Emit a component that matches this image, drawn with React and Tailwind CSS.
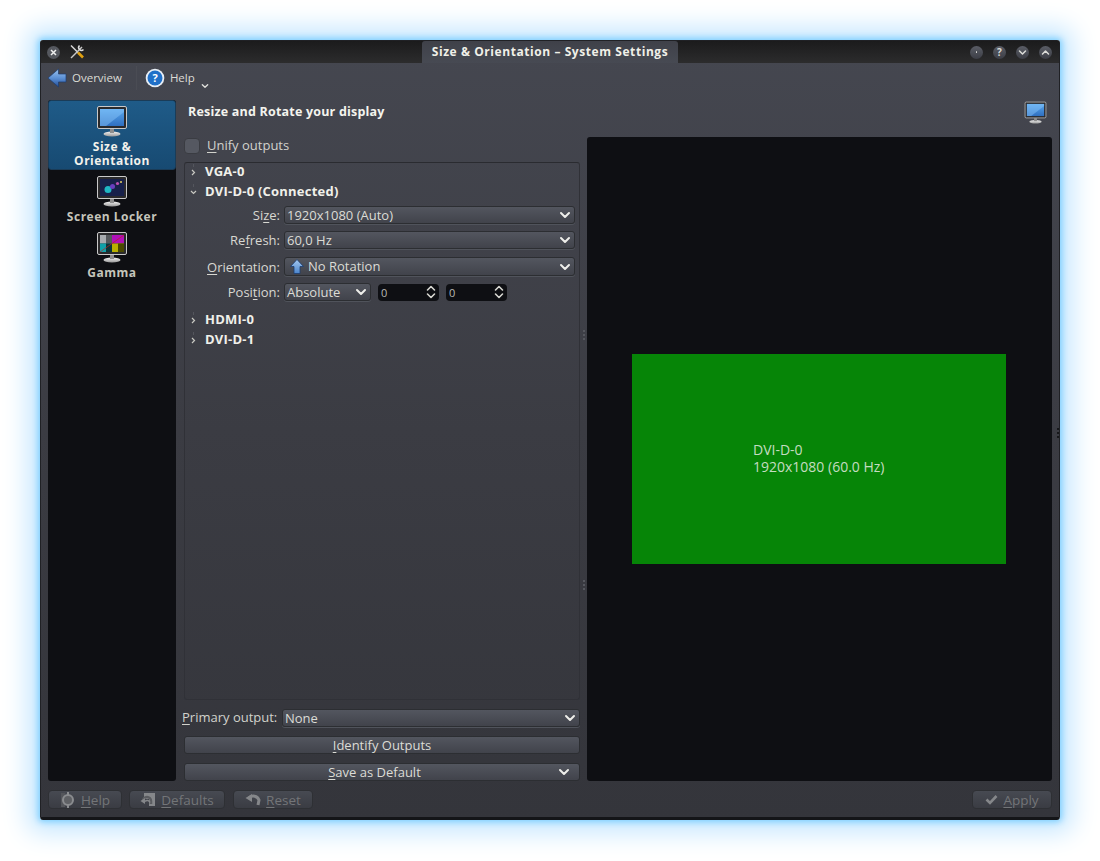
import React from "react";

const FONT = { fontFamily: '"Open Sans", "Noto Sans", sans-serif' };

function Chevron({ className = "", size = 12 }) {
  return (
    <svg width={size} height={size} viewBox="0 0 12 12" className={`shrink-0 ${className}`} fill="none">
      <path d="M2 4l4 4 4-4" stroke="currentColor" strokeWidth="2" strokeLinecap="round" strokeLinejoin="round" />
    </svg>
  );
}

function Monitor({ variant = "blue", size = 32, id, className = "" }) {
  return (
    <svg width={size} height={size} viewBox="0 0 32 32" className={`shrink-0 ${className}`}>
      <defs>
        <linearGradient id={id + "b"} x1="0" y1="0" x2="0" y2="1">
          <stop offset="0" stopColor="#5aa8ee" />
          <stop offset="1" stopColor="#2f6fc0" />
        </linearGradient>
        <linearGradient id={id + "s"} x1="0" y1="0" x2="0" y2="1">
          <stop offset="0" stopColor="#f2f2f2" />
          <stop offset="1" stopColor="#9a9a9a" />
        </linearGradient>
      </defs>
      <ellipse cx="16" cy="29" rx="8.5" ry="2.4" fill={`url(#${id}s)`} />
      <rect x="14" y="24" width="4" height="4" fill="#8d8d8d" />
      <rect x="1.500" y="1.500" width="29" height="22" rx="1.500" fill="#2a2a2c" stroke="#c9c9c9" strokeWidth="1" />
      {variant === "blue" && (
        <g>
          <rect x="4" y="4" width="24" height="17" fill={`url(#${id}b)`} />
          <path d="M4 4h24v3L10 21H4z" fill="#8cc8fa" opacity="0.45" />
        </g>
      )}
      {variant === "lock" && (
        <g>
          <rect x="4" y="4" width="24" height="17" fill="#17204a" />
          <circle cx="12" cy="14.500" r="3.500" fill="#1fb6c4" />
          <circle cx="16.500" cy="11.500" r="2.500" fill="#6a3fc0" />
          <circle cx="21.500" cy="8.500" r="1.600" fill="#c04fb0" />
          <circle cx="25" cy="7" r="1" fill="#e8d060" />
        </g>
      )}
      {variant === "gamma" && (
        <g>
          <rect x="4" y="4" width="12" height="8.500" fill="#a9acb0" />
          <rect x="16" y="4" width="12" height="8.500" fill="#b010b8" />
          <rect x="4" y="12.500" width="12" height="8.500" fill="#10a0a8" />
          <rect x="16" y="12.500" width="12" height="8.500" fill="#b8b000" />
          <rect x="10" y="4" width="6" height="8.500" fill="#55585c" />
          <rect x="10" y="12.500" width="6" height="8.500" fill="#0a3438" />
          <rect x="22" y="12.500" width="6" height="8.500" fill="#4a4800" />
          <path d="M4 21L28 4" stroke="#c02020" strokeWidth="0.700" />
        </g>
      )}
    </svg>
  );
}

function Ul({ children }) {
  return <span className="underline underline-offset-2">{children}</span>;
}

function Combo({ children, className = "", icon }) {
  return (
    <div className={`flex items-center h-[18px] rounded-[3px] border border-[#2c2e32] bg-gradient-to-b from-[#53565f] to-[#41434b] shadow-[0_1px_0_#50535b] pl-[2px] pr-[3px] text-[#dcdcd6] ${className}`}>
      {icon}
      <span className="flex-1 text-[13px] leading-none whitespace-nowrap">{children}</span>
      <Chevron className="text-[#eeeeea]" />
    </div>
  );
}

function Spin() {
  return (
    <div className="flex items-center justify-between w-[61px] h-[17px] rounded-[4px] bg-[#0e0f13] pl-[3px] pr-[3px] text-[11px] text-[#b9b9b3]">
      <span className="mt-[2px]">0</span>
      <svg width="10" height="14" viewBox="0 0 10 14" fill="none" className="text-[#d8d8d2]">
        <path d="M1.500 5l3.500-3.500L8.500 5M1.500 9l3.500 3.500L8.500 9" stroke="currentColor" strokeWidth="1.600" strokeLinecap="round" strokeLinejoin="round" />
      </svg>
    </div>
  );
}

function Expander({ open, children, className = "" }) {
  return (
    <div className={`flex items-center h-[20px] ${className}`}>
      <span className="w-[20px] pl-[5px] text-[#c8c8c2] flex items-center">
        <svg width="7" height="14" viewBox="0 0 7 14" fill="none" className="-mt-[3px]">
          <path d="M3.500 0v3" stroke="#54565d" strokeWidth="1" />
          {open ? (
            <path d="M1 7l2.500 2.500L6 7" stroke="currentColor" strokeWidth="1.200" />
          ) : (
            <path d="M2 6l2.500 2.500L2 11" stroke="currentColor" strokeWidth="1.200" />
          )}
        </svg>
      </span>
      <span className="text-[13px] font-bold text-[#f0f0ea] whitespace-nowrap tracking-[0.22px]">{children}</span>
    </div>
  );
}

function FormRow({ label, children, className = "" }) {
  return (
    <div className={`flex items-center ${className}`}>
      <span className="w-[99px] pr-[4px] text-right text-[13px] leading-[18px] text-[#d8d8d2] whitespace-nowrap">{label}</span>
      {children}
    </div>
  );
}

function SideItem({ active, label, variant, id, className = "" }) {
  return (
    <div className={`flex flex-col items-center text-center ${className}`}>
      <Monitor variant={variant} id={id} />
      <span className={`text-[12px] font-bold leading-[14px] mt-[3px] tracking-[0.5px] ${active ? "text-[#f2f2ec]" : "text-[#c5c5bb]"}`}>{label}</span>
    </div>
  );
}

function BottomBtn({ icon, children, className = "" }) {
  return (
    <div className={`flex items-center justify-center gap-[5px] h-[19px] rounded-[4px] border border-[#2e3034] bg-gradient-to-b from-[#474a52] to-[#3a3c43] text-[13.500px] text-[#737578] ${className}`}>
      {icon}
      <span className="mt-[1px]">{children}</span>
    </div>
  );
}

function TitleDot({ children }) {
  return (
    <div className="w-[13px] h-[13px] rounded-full bg-gradient-to-b from-[#5a5d66] to-[#3c3e46] flex items-center justify-center text-[#dcdcd8]">
      {children}
    </div>
  );
}

function Grip() {
  return (
    <div className="flex flex-col items-center gap-[2px]">
      <span className="w-[2px] h-[2px] bg-[#55575e]" />
      <span className="w-[2px] h-[2px] bg-[#55575e]" />
      <span className="w-[2px] h-[2px] bg-[#55575e]" />
    </div>
  );
}

export default function App() {
  return (
    <div className="w-[1100px] h-[861px] bg-white pt-[40px] pl-[40px] overflow-hidden" style={FONT}>
      <div className="relative w-[1020px] h-[780px] flex flex-col rounded-[3px] bg-gradient-to-b from-[#454750] via-[#3b3c43] to-[#34353b] border border-[#202125] border-b-[3px] border-b-[#141518] shadow-[0_0_6px_2px_#7fd0ff,0_0_26px_12px_#c4e6ff]">
        {/* title bar */}
        <div className="h-[22px] shrink-0 flex items-center bg-gradient-to-b from-[#1b1b1c] to-[#2c2c2d] pl-[6px] pr-[7px]">
          <div className="w-[13px] h-[13px] rounded-full bg-[#55585f] flex items-center justify-center text-[#f0f0f0]">
            <svg width="7" height="7" viewBox="0 0 7 7" fill="none">
              <path d="M1 1l5 5M6 1l-5 5" stroke="currentColor" strokeWidth="1.500" />
            </svg>
          </div>
          <svg width="16" height="16" viewBox="0 0 16 16" className="ml-[9px]" fill="none">
            <path d="M2 1.500l7 7" stroke="#d8d8d8" strokeWidth="1.500" />
            <path d="M9 8.500l5 5" stroke="#e0a010" strokeWidth="2.600" />
            <path d="M13 3L2 14" stroke="#c8c8c8" strokeWidth="1.500" />
            <path d="M10.500 1.500a2.800 2.800 0 0 0 4 4" stroke="#ddd" strokeWidth="1.500" />
          </svg>
          <div className="ml-[337px] w-[256px] h-[22px] rounded-t-[3px] bg-gradient-to-b from-[#3f4149] to-[#474a53] flex items-center justify-center text-[12px] font-bold text-[#f0f0e8] tracking-[0.57px] whitespace-nowrap">
            Size &amp; Orientation – System Settings
          </div>
          <div className="flex-1" />
          <div className="flex items-center gap-[10px]">
            <TitleDot><span className="w-[1.500px] h-[1.500px] bg-current rounded-full" /></TitleDot>
            <TitleDot><span className="text-[10px] font-bold leading-none">?</span></TitleDot>
            <TitleDot><Chevron size={9} /></TitleDot>
            <TitleDot><Chevron size={9} className="rotate-180" /></TitleDot>
          </div>
        </div>

        {/* toolbar */}
        <div className="h-[32px] shrink-0 flex items-center pl-[6px] pb-[2px] text-[11.500px] text-[#dcdcd6]">
          <svg width="21" height="20" viewBox="0 0 21 20">
            <defs>
              <linearGradient id="ov" x1="0" y1="0" x2="0" y2="1">
                <stop offset="0" stopColor="#9cc4ee" />
                <stop offset="0.500" stopColor="#5c90d4" />
                <stop offset="1" stopColor="#244f98" />
              </linearGradient>
            </defs>
            <path d="M1 10l10.500-9v5H19v8h-7.500v5z" fill="url(#ov)" stroke="#1c3c70" strokeWidth="0.700" strokeLinejoin="round" />
          </svg>
          <span className="ml-[4px]">Overview</span>
          <div className="ml-[14px] w-px h-[24px] bg-[#4a4c54]" />
          <svg width="20" height="20" viewBox="0 0 20 20" className="ml-[8px]">
            <circle cx="10" cy="10" r="9.300" fill="#e8eef5" />
            <circle cx="10" cy="10" r="7.500" fill="#2070c8" />
            <text x="10" y="14" textAnchor="middle" fontSize="11" fontWeight="700" fill="#fff" fontFamily="Open Sans">?</text>
          </svg>
          <span className="ml-[5px]">Help</span>
          <Chevron size={8} className="ml-[6px] mt-[16px] text-[#e0e0dc]" />
        </div>

        {/* body */}
        <div className="flex-1 min-h-0 flex pl-[7px] pr-[7px] pt-[5px]">
          {/* sidebar */}
          <div className="w-[128px] h-[681px] shrink-0 rounded-[3px] bg-[#0e0f13] flex flex-col">
            <div className="h-[70px] shrink-0 rounded-[3px] bg-gradient-to-b from-[#1f5b88] to-[#174a72] pt-[4px] border border-[#1a3c58]">
              <SideItem active variant="blue" id="m1" label={<>Size &amp;<br />Orientation</>} />
            </div>
            <SideItem variant="lock" id="m2" label="Screen Locker" className="mt-[5px]" />
            <SideItem variant="gamma" id="m3" label="Gamma" className="mt-[7px]" />
          </div>

          {/* main */}
          <div className="flex-1 min-w-0 flex flex-col pl-[8px]">
            <div className="h-[32px] shrink-0 flex items-start justify-between pl-[4px] pr-[5px]">
              <span className="text-[12.500px] font-bold text-[#f4f4ee] tracking-[0.2px] mt-[3px]">Resize and Rotate your display</span>
              <Monitor variant="blue" size={23} id="m4" className="mt-[1px]" />
            </div>
            <div className="flex-1 min-h-0 flex">
              {/* left */}
              <div className="w-[396px] shrink-0 flex flex-col">
                <div className="h-[30px] shrink-0 flex items-center pb-[3px]">
                  <div className="w-[16px] h-[16px] rounded-[4px] border border-[#3a3c42] bg-[#555861]" />
                  <span className="ml-[7px] text-[13px] text-[#d2d2cc] whitespace-nowrap"><Ul>U</Ul>nify outputs</span>
                </div>
                <div className="h-[538px] shrink-0 rounded-[3px] border border-[#303137] border-t-[#2a2b30]">
                  <div className="-mt-px">
                    <Expander>VGA-0</Expander>
                    <Expander open>DVI-D-0 (Connected)</Expander>
                  </div>
                  <div className="flex flex-col gap-[7px] mt-[4px]">
                    <FormRow label={<>Si<Ul>z</Ul>e:</>}><Combo className="w-[291px]">1920x1080 (Auto)</Combo></FormRow>
                    <FormRow label={<>Re<Ul>f</Ul>resh:</>}><Combo className="w-[291px]">60,0 Hz</Combo></FormRow>
                    <FormRow label={<><Ul>O</Ul>rientation:</>} className="mt-[1px]">
                      <Combo
                        className="w-[291px] h-[19px]"
                        icon={
                          <svg width="14" height="15" viewBox="0 0 14 15" className="ml-[3px] mr-[4px] shrink-0">
                            <defs>
                              <linearGradient id="upa" x1="0" y1="0" x2="0" y2="1">
                                <stop offset="0" stopColor="#a4c8f0" />
                                <stop offset="1" stopColor="#4a84cc" />
                              </linearGradient>
                            </defs>
                            <path d="M7 0.500l6.500 7H10v7H4v-7H0.500z" fill="url(#upa)" stroke="#1c3c70" strokeWidth="0.800" strokeLinejoin="round" />
                          </svg>
                        }
                      >
                        No Rotation
                      </Combo>
                    </FormRow>
                    <FormRow label={<>Posi<Ul>t</Ul>ion:</>}>
                      <Combo className="w-[87px]">Absolute</Combo>
                      <div className="ml-[7px]"><Spin /></div>
                      <div className="ml-[7px]"><Spin /></div>
                    </FormRow>
                  </div>
                  <Expander className="mt-[9px]">HDMI-0</Expander>
                  <Expander>DVI-D-1</Expander>
                </div>
                <div className="flex items-center mt-[9px] -ml-[2px] h-[18px]">
                  <span className="w-[100px] text-[13px] text-[#d2d2cc] whitespace-nowrap"><Ul>P</Ul>rimary output:</span>
                  <Combo className="w-[298px]">None</Combo>
                </div>
                <div className="mt-[9px] h-[18px] rounded-[3px] border border-[#2c2e32] bg-gradient-to-b from-[#53565f] to-[#41434b] flex items-center justify-center text-[13px] text-[#dcdcd6]">
                  <span className="mt-[1px]"><Ul>I</Ul>dentify Outputs</span>
                </div>
                <div className="relative mt-[9px] h-[18px] rounded-[3px] border border-[#2c2e32] bg-gradient-to-b from-[#53565f] to-[#41434b] flex items-center justify-center text-[13px] text-[#dcdcd6] pr-[15px]">
                  <span className="mt-[1px]"><Ul>S</Ul>ave as Default</span>
                  <Chevron className="absolute right-[9px] top-[2px] text-[#eeeeea]" />
                </div>
              </div>
              {/* splitter */}
              <div className="w-[7px] shrink-0 flex flex-col items-center pt-[198px] gap-[240px]">
                <Grip />
                <Grip />
              </div>
              {/* preview */}
              <div className="mt-[5px] flex-1 h-[644px] rounded-[3px] bg-[#0e0f13] flex items-center pl-[45px]">
                <div className="w-[374px] h-[210px] bg-[#068507] flex flex-col pl-[121px] pt-[87px] text-[14px] leading-[17px] text-[#c4dcc0]">
                  <span>DVI-D-0</span>
                  <span>1920x1080 (60.0 Hz)</span>
                </div>
              </div>
            </div>
          </div>
        </div>

        {/* footer */}
        <div className="h-[37px] shrink-0 flex items-start pt-[10px] pl-[7px] pr-[7px]">
          <BottomBtn className="w-[74px]" icon={
            <svg width="16" height="16" viewBox="0 0 16 16" fill="none">
              <rect x="1" y="1" width="4" height="14" fill="#54565b" />
              <circle cx="8" cy="8" r="5" fill="#5f6165" stroke="#8a8c8f" strokeWidth="2" />
              <path d="M8 0v3M8 13v3" stroke="#8a8c8f" strokeWidth="2" />
            </svg>
          }><Ul>H</Ul>elp</BottomBtn>
          <BottomBtn className="w-[96px] ml-[7px]" icon={
            <svg width="16" height="16" viewBox="0 0 16 16" fill="none">
              <path d="M4 1h11v13H9V7H4z" fill="#85878a" />
              <path d="M3 9a4 4 0 0 1 8 0v3" stroke="#5a5c60" strokeWidth="2.500" />
              <path d="M0.500 9L5 6v6z" fill="#85878a" />
              <path d="M5 9.500a3 3 0 0 1 5 1" stroke="#85878a" strokeWidth="1.500" />
            </svg>
          }><Ul>D</Ul>efaults</BottomBtn>
          <BottomBtn className="w-[80px] ml-[8px]" icon={
            <svg width="16" height="14" viewBox="0 0 16 14" fill="none">
              <path d="M4 5a6 6 0 0 1 10 2l-1 5" stroke="#85878a" strokeWidth="3" />
              <path d="M0.500 5L7 1v8z" fill="#85878a" />
            </svg>
          }><Ul>R</Ul>eset</BottomBtn>
          <div className="flex-1" />
          <BottomBtn className="w-[80px]" icon={
            <svg width="13" height="11" viewBox="0 0 13 11" fill="none"><path d="M1.500 5.500l3.500 3.500L11.500 2" stroke="#85878a" strokeWidth="2.600" /></svg>
          }><Ul>A</Ul>pply</BottomBtn>
        </div>

        {/* window-edge resize grip */}
        <div className="absolute right-0 top-[387px]">
          <div className="flex flex-col gap-[2px]">
            <span className="w-[2px] h-[2px] bg-[#17181b]" />
            <span className="w-[2px] h-[2px] bg-[#17181b]" />
            <span className="w-[2px] h-[2px] bg-[#17181b]" />
          </div>
        </div>
      </div>
    </div>
  );
}
